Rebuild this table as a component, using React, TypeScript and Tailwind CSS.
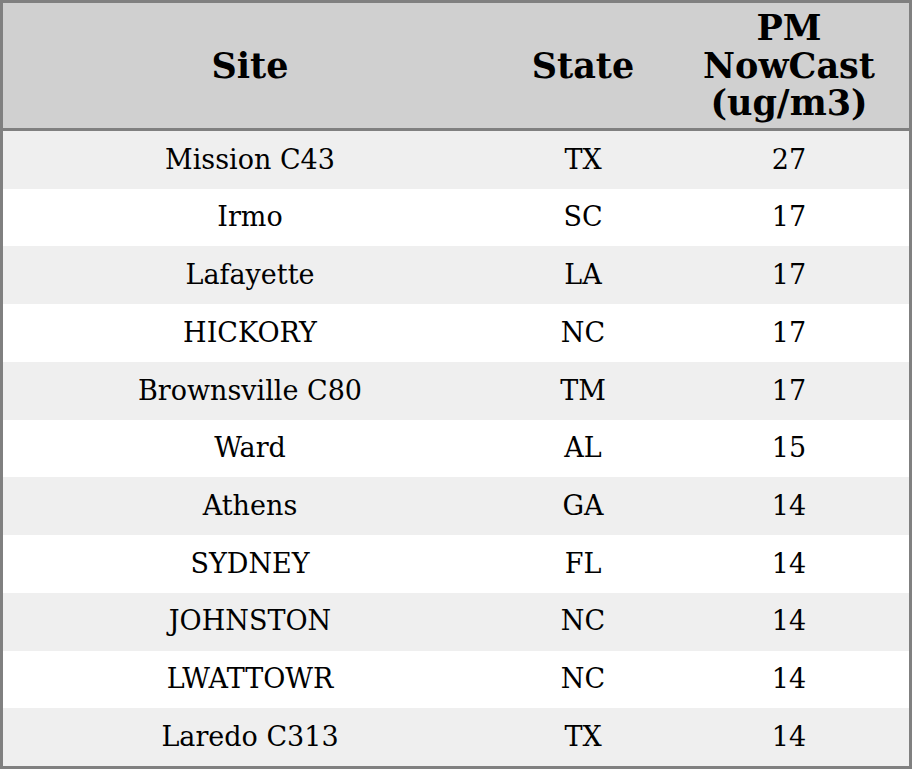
import React from "react";

const rows: [string, string, string][] = [
  ["Mission C43", "TX", "27"],
  ["Irmo", "SC", "17"],
  ["Lafayette", "LA", "17"],
  ["HICKORY", "NC", "17"],
  ["Brownsville C80", "TM", "17"],
  ["Ward", "AL", "15"],
  ["Athens", "GA", "14"],
  ["SYDNEY", "FL", "14"],
  ["JOHNSTON", "NC", "14"],
  ["LWATTOWR", "NC", "14"],
  ["Laredo C313", "TX", "14"],
];

export default function App() {
  return (
    <div
      className="w-[912px] h-[769px] bg-white text-black"
      style={{ fontFamily: '"DejaVu Serif", "Liberation Serif", serif' }}
    >
      <div className="w-[912px] h-[769px] border-[3px] border-[#808080] flex flex-col">
        <div className="grid grid-cols-[494px_172px_240px] h-[128px] bg-[#d0d0d0] border-b-[3px] border-[#808080] shrink-0 font-bold text-[35px] leading-[37.5px]">
          <div className="flex items-center justify-center text-center">Site</div>
          <div className="flex items-center justify-center text-center">State</div>
          <div className="flex items-center justify-center text-center">
            PM
            <br />
            NowCast
            <br />
            (ug/m3)
          </div>
        </div>
        <div className="flex flex-col flex-1">
          {rows.map((r, i) => (
            <div
              key={i}
              className={
                "grid grid-cols-[494px_172px_240px] flex-1 text-[27px] " +
                (i % 2 === 0 ? "bg-[#efefef]" : "bg-white")
              }
            >
              <div className="flex items-center justify-center">{r[0]}</div>
              <div className="flex items-center justify-center">{r[1]}</div>
              <div className="flex items-center justify-center">{r[2]}</div>
            </div>
          ))}
        </div>
      </div>
    </div>
  );
}
